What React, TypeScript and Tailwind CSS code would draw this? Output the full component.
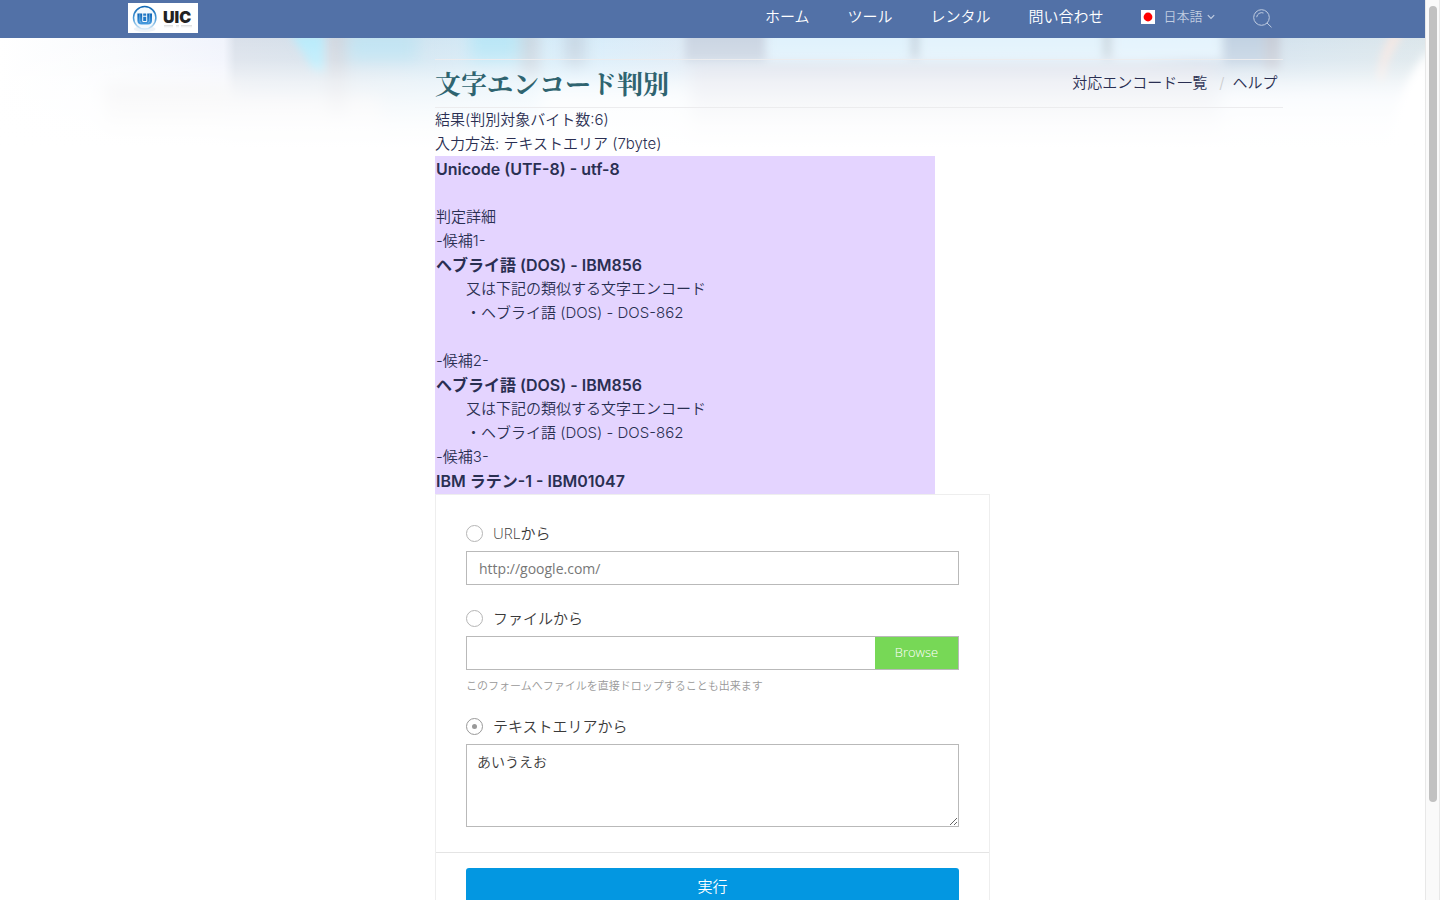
import { useState } from "react";

// --- Page content ---

const navLinks = ["ホーム", "ツール", "レンタル", "問い合わせ"];

type ResultLine = {
  text: string;
  bold?: boolean;
  indent?: boolean;
};

const resultLines: ResultLine[] = [
  { text: "Unicode (UTF-8) - utf-8", bold: true },
  { text: "" },
  { text: "判定詳細" },
  { text: "-候補1-" },
  { text: "ヘブライ語 (DOS) - IBM856", bold: true },
  { text: "又は下記の類似する文字エンコード", indent: true },
  { text: "・ヘブライ語 (DOS) - DOS-862", indent: true },
  { text: "" },
  { text: "-候補2-" },
  { text: "ヘブライ語 (DOS) - IBM856", bold: true },
  { text: "又は下記の類似する文字エンコード", indent: true },
  { text: "・ヘブライ語 (DOS) - DOS-862", indent: true },
  { text: "-候補3-" },
  { text: "IBM ラテン-1 - IBM01047", bold: true },
];

const radioClass =
  "flex size-[17px] shrink-0 appearance-none items-center justify-center rounded-full border border-[#b5b5b5] bg-white checked:border-[#999] checked:before:size-[5px] checked:before:rounded-full checked:before:bg-[#999] checked:before:content-['']";

const fieldClass = "block w-full border border-[#b9b9b9] bg-white text-sm outline-none";

function Logo() {
  return (
    <svg width="70" height="30" viewBox="0 0 70 30" className="block">
      <defs>
        <linearGradient id="ring" x1="0" y1="0" x2="0" y2="1">
          <stop offset="0" stopColor="#1268b4" />
          <stop offset="0.55" stopColor="#4d9cd8" />
          <stop offset="1" stopColor="#d5eaf8" />
        </linearGradient>
        <linearGradient id="mark" x1="0" y1="0" x2="0" y2="1">
          <stop offset="0" stopColor="#0b63b5" />
          <stop offset="1" stopColor="#4a9ee0" />
        </linearGradient>
        <linearGradient id="shine" x1="0" y1="0" x2="0" y2="1">
          <stop offset="0" stopColor="#999" stopOpacity="0.4" />
          <stop offset="1" stopColor="#fff" stopOpacity="0" />
        </linearGradient>
      </defs>
      <rect width="70" height="30" fill="#fff" />
      <ellipse cx="16.7" cy="26" rx="11" ry="3" fill="#eef3f8" />
      <circle cx="16.7" cy="14.8" r="11.2" fill="#f3f9fd" stroke="url(#ring)" strokeWidth="1.5" />
      <path
        d="M9.400 10.500h4.800v7.500q0 1 1 1h3q1 0 1-1v-7.500h4.800v7q0 4-4 4h-6.600q-4 0-4-4z"
        fill="url(#mark)"
      />
      <path d="M15.200 10.500h3v2.200h-3zM15.200 13.800h3v4.200h-3z" fill="#1f78c6" />
      <path d="M11.800 10.500v7q0 2 1.500 2M21.600 10.500v7q0 2-1.500 2" fill="none" stroke="#9ccbef" strokeWidth="0.6" />
      <text x="35" y="20" fontFamily="Inter, 'Liberation Sans', sans-serif" fontWeight="900" fontSize="16" fill="#222">
        UIC
      </text>
      <path d="M36 22h9v4h-9zM48 22h3v4h-3zM53 22h11v4h-11z" fill="url(#shine)" />
    </svg>
  );
}

// Blurred office photo that fades out behind the title
function HeroBackdrop() {
  return (
    <svg
      className="absolute inset-x-0 top-0 -z-10 h-[110px] w-full"
      viewBox="0 0 1425 110"
      preserveAspectRatio="none"
      aria-hidden="true"
    >
      <defs>
        <filter id="soft" x="-20%" y="-20%" width="140%" height="140%">
          <feGaussianBlur stdDeviation="8" />
        </filter>
        <filter id="edge" x="-20%" y="-20%" width="140%" height="140%">
          <feGaussianBlur stdDeviation="4" />
        </filter>
        <linearGradient id="base" x1="0" y1="0" x2="1" y2="0">
          <stop offset="0" stopColor="#fff" />
          <stop offset="0.08" stopColor="#f8fafd" />
          <stop offset="0.157" stopColor="#f0f3fc" />
          <stop offset="0.165" stopColor="#d8dfe9" />
          <stop offset="0.23" stopColor="#d2dee9" />
          <stop offset="0.3" stopColor="#cfe4f1" />
          <stop offset="0.4" stopColor="#d5edfb" />
          <stop offset="0.48" stopColor="#dbe9f5" />
          <stop offset="0.62" stopColor="#e0f1fb" />
          <stop offset="0.8" stopColor="#e0eef8" />
          <stop offset="0.84" stopColor="#cddbe9" />
          <stop offset="0.92" stopColor="#d4e3ed" />
          <stop offset="1" stopColor="#dae5ea" />
        </linearGradient>
        <linearGradient id="fade" x1="0" y1="0" x2="0" y2="1">
          <stop offset="0" stopColor="#fff" stopOpacity="0.05" />
          <stop offset="0.2" stopColor="#fff" stopOpacity="0.22" />
          <stop offset="0.4" stopColor="#fff" stopOpacity="0.6" />
          <stop offset="0.6" stopColor="#fff" stopOpacity="0.8" />
          <stop offset="0.8" stopColor="#fff" stopOpacity="0.94" />
          <stop offset="1" stopColor="#fff" stopOpacity="1" />
        </linearGradient>
      </defs>
      <rect width="1425" height="110" fill="url(#base)" />
      <g filter="url(#soft)">
        <rect x="105" y="48" width="130" height="50" fill="#e8e8ea" />
        <rect x="220" y="58" width="160" height="50" fill="#e6e7ec" />
        <rect x="330" y="-10" width="14" height="90" fill="#cdd0d8" />
        <rect x="348" y="-5" width="70" height="30" fill="#bce2f2" />
        <rect x="470" y="-10" width="50" height="35" fill="#b5e5f6" />
        <rect x="523" y="-10" width="14" height="50" fill="#c4ccd6" />
        <rect x="565" y="-10" width="20" height="40" fill="#c2d2e0" />
        <rect x="540" y="50" width="150" height="60" fill="#f0f7fc" />
        <rect x="690" y="24" width="525" height="90" fill="#d8dde8" />
        <rect x="1220" y="50" width="210" height="60" fill="#ecf3fb" />
      </g>
      <g filter="url(#edge)">
        <path d="M290 -4h34v38q-12 2-18-14z" fill="#b5eafb" />
        <rect x="685" y="-10" width="80" height="34" fill="#c8d3e1" />
        <rect x="770" y="-10" width="138" height="31" fill="#def1fc" />
        <rect x="911" y="-10" width="8" height="30" fill="#c3d2de" />
        <rect x="922" y="-10" width="180" height="31" fill="#e1f2fc" />
        <rect x="1103" y="-10" width="8" height="30" fill="#c8d5de" />
        <rect x="1115" y="-10" width="106" height="31" fill="#e3f3fd" />
        <rect x="1225" y="-10" width="48" height="38" fill="#bfd0e1" />
        <rect x="1264" y="-10" width="16" height="42" fill="#c5cbd6" />
        <path d="M1392 -5h12q-20 30-20 48h-6q0-26 14-48z" fill="#f5e6e1" />
        <path d="M1430 10v100h-40q5-60 40-100z" fill="#fff" />
      </g>
      <rect width="1425" height="110" fill="url(#fade)" />
    </svg>
  );
}

function Header() {
  return (
    <header className="h-[38px] bg-[#5271a7] text-white">
      <div className="mx-auto flex h-full max-w-[1170px] items-center justify-between pr-[25px] pb-1">
        <a href="#" aria-label="UIC" className="pt-0.5">
          <Logo />
        </a>
        <nav className="flex items-center gap-[38px]">
          {navLinks.map((label) => (
            <a key={label} href="#" className="leading-6">
              {label}
            </a>
          ))}
          <button type="button" className="flex items-center text-[13px] text-[#c1cde1]">
            <svg width="14" height="14" viewBox="0 0 14 14" className="mr-2">
              <rect width="14" height="14" fill="#fff" />
              <circle cx="7" cy="7" r="4.400" fill="#f00" />
            </svg>
            日本語
            <svg width="8" height="6" viewBox="0 0 8 6" className="ml-1">
              <path d="M0.800 1.200L4 4.400L7.200 1.200" fill="none" stroke="currentColor" strokeWidth="1.200" />
            </svg>
          </button>
          <button type="button" aria-label="検索" className="pt-0.5 text-[#c1cde1]">
            <svg width="20" height="19" viewBox="0 0 20 19" fill="none" stroke="currentColor">
              <circle cx="8.500" cy="8.500" r="7.800" />
              <path d="M3.700 8.200a5 5 0 0 1 6.800-4.200M14 14l4.500 4.300" />
            </svg>
          </button>
        </nav>
      </div>
    </header>
  );
}

function EncodeForm() {
  const [source, setSource] = useState("text");

  const radio = (value: string, label: string) => (
    <label className="mb-1.5 flex h-6 items-center gap-2.5">
      <input
        type="radio"
        name="source"
        value={value}
        checked={source === value}
        onChange={() => setSource(value)}
        className={radioClass}
      />
      {label}
    </label>
  );

  return (
    <form
      className="w-[555px] max-w-full border border-[#eee] bg-white font-['Open_Sans','Noto_Sans_CJK_JP',sans-serif] text-[#3a3a3a]"
      onSubmit={(e) => e.preventDefault()}
    >
      <div className="px-[30px] pt-[26px] pb-[25px]">
        {radio("url", "URLから")}
        <input
          type="text"
          aria-label="URL"
          placeholder="http://google.com/"
          className={`${fieldClass} mb-[21px] h-[34px] px-3 font-normal placeholder:text-[#777]`}
        />

        {radio("file", "ファイルから")}
        <div className="flex h-[34px] border border-[#b9b9b9]">
          <input type="text" readOnly aria-label="ファイル" className="min-w-0 flex-1 px-3 text-sm outline-none" />
          <button type="button" className="w-[83px] bg-[#77d856] text-[13px] font-light text-white">
            Browse
          </button>
        </div>
        <p className="mt-2 mb-5 text-[11px] leading-4 text-[#999]">
          このフォームへファイルを直接ドロップすることも出来ます
        </p>

        {radio("text", "テキストエリアから")}
        <textarea
          aria-label="テキストエリア"
          defaultValue="あいうえお"
          className={`${fieldClass} h-[83px] resize px-2.5 py-[7px] leading-5`}
        />
      </div>
      <div className="border-t border-[#e4e4e4] px-[30px] py-[15px]">
        <button type="submit" className="block h-9 w-full rounded-[3px] bg-[#0397e1] text-white">
          実行
        </button>
      </div>
    </form>
  );
}

export default function App() {
  return (
    <div className="flex items-start bg-white font-[Inter,'Noto_Sans_CJK_JP',sans-serif] text-[15px] font-[350] text-[#2a2f52]">
      <div className="min-w-0 flex-1">
        <Header />
        <main className="relative isolate pt-[21px]">
          <HeroBackdrop />
          <div className="mx-auto max-w-[1170px]">
            <div className="ml-auto w-3/4 px-[15px]">
              {/* Title */}
              <div className="flex h-[49px] items-center justify-between border-y border-[#ececee] pr-[5px]">
                <h1 className="pb-0.5 font-['Noto_Serif_CJK_JP','Liberation_Serif','Noto_Sans_CJK_JP',serif] text-[26px] leading-9 font-bold text-[#2f6470]">
                  文字エンコード判別
                </h1>
                <div className="flex items-center">
                  <a href="#">対応エンコード一覧</a>
                  <span className="pr-2 pl-3 text-[#ccc]">/</span>
                  <a href="#">ヘルプ</a>
                </div>
              </div>

              {/* Result */}
              <div className="leading-6">
                <p>結果(判別対象バイト数:6)</p>
                <p>入力方法: テキストエリア (7byte)</p>
                <div className="w-[500px] max-w-full bg-[#e4d4ff] p-px">
                  {resultLines.map((line, i) => (
                    <p
                      key={i}
                      className={`min-h-6 ${line.bold ? "text-base leading-6 font-semibold" : ""} ${line.indent ? "pl-[30px]" : ""}`}
                    >
                      {line.text}
                    </p>
                  ))}
                </div>
              </div>

              <EncodeForm />
            </div>
          </div>
        </main>
      </div>

      {/* Scroll rail */}
      <div className="sticky top-0 h-screen w-[15px] shrink-0 border-x border-[#e8e8e8] bg-[#fafafa] px-[3px] pt-1.5">
        <div className="h-[89%] w-2 rounded-full bg-[#c1c1c1]" />
      </div>
    </div>
  );
}
